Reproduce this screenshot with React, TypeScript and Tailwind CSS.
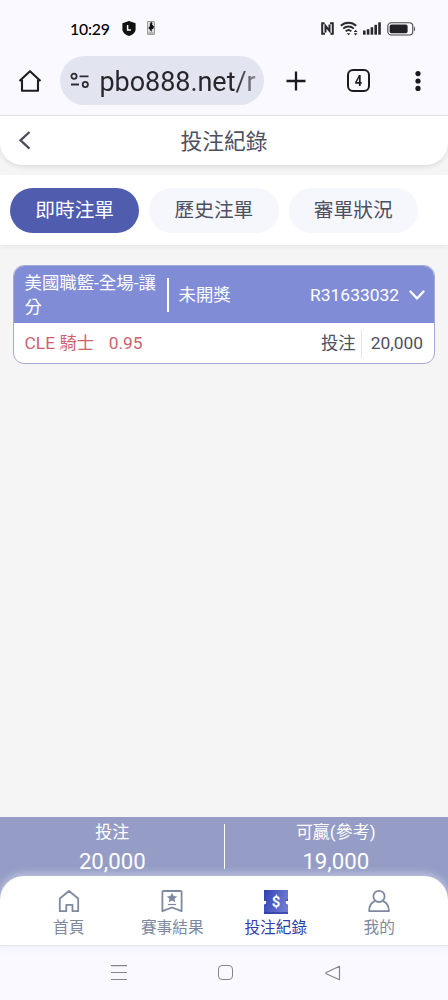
import { useState } from "react";
import type { ReactNode } from "react";

const tabs = ["即時注單", "歷史注單", "審單狀況"];

function StatusBar() {
  return (
    <div className="flex h-14 items-center pl-[70px] pr-8 text-[#1b1b1f]">
      <span className="w-[40px] whitespace-nowrap pt-[2px] font-[Lato,sans-serif] text-[15.800px] font-medium leading-none tracking-[-0.2px] text-black">
        10:29
      </span>
      <svg className="ml-3" width="14" height="15" viewBox="0 0 14 15">
        <path d="M0.4 2.2 7 0l6.6 2.2v6c0 3.5-3 5.4-6.6 6.800C3.400 13.600.4 11.700.4 8.200Z" fill="#111" />
        <path d="M5.600 4v5h3.300" stroke="#fff" strokeWidth="1.500" fill="none" />
      </svg>
      <svg className="ml-[11px]" width="8" height="14" viewBox="0 0 8 14">
        <rect x="0.500" y="0.500" width="7" height="13" rx="0.500" fill="#ddd" stroke="#888" strokeWidth="0.800" />
        <path d="M4 .8 5.500 2 5 3.500 7 5.500 6.500 7.500 4.500 8.500 5 10.500 3.500 10 3 8.500 1.200 7 2.800 5.500 3 3Z" fill="#111" />
        <path d="M1.500 12h5" stroke="#777" strokeWidth="0.800" />
      </svg>
      <div className="ml-auto flex items-center">
        <svg width="13" height="13" viewBox="0 0 13 13" fill="none" stroke="#29292d">
          <path d="M4 11.800H1.200V1.200h2.300M9 1.200h2.800v10.600H9.500" strokeWidth="2" />
          <path d="M4.500 10.500V3.800l4 5V2.500" strokeWidth="2" />
        </svg>
        <svg className="ml-[6px]" width="19" height="15" viewBox="0 0 19 15" fill="none" stroke="#29292d">
          <path d="M0.800 4.800C5 .7 12 .7 16.200 4.800M3.200 7.600c3-2.900 7.600-2.900 10.600 0M5.700 10.400c1.700-1.600 3.900-1.600 5.600 0" strokeWidth="1.900" />
          <path d="M6.600 12.200h3.800l-1.900 2Z" fill="#29292d" stroke="none" />
          <path d="m13.700 11 1.900-2.200 1.900 2.200ZM13.700 12.200h3.800l-1.900 2.200Z" fill="#29292d" stroke="none" />
        </svg>
        <svg className="ml-[4px]" width="18" height="13" viewBox="0 0 18 13" fill="#29292d">
          <rect x="0" y="8.500" width="2.600" height="4.200" />
          <rect x="3.800" y="7.200" width="2.600" height="5.500" />
          <rect x="7.600" y="5.200" width="2.600" height="7.500" />
          <rect x="11.400" y="2.800" width="2.600" height="9.900" />
          <rect x="15.200" y="0.300" width="2.600" height="12.400" />
        </svg>
        <svg className="ml-[6px] mt-[1px]" width="29" height="14" viewBox="0 0 29 14">
          <rect x="0.800" y="0.800" width="25" height="12.200" rx="3.500" fill="none" stroke="#444" strokeWidth="1.100" />
          <rect x="2.600" y="2.600" width="18" height="8.600" rx="1.800" fill="#222226" />
          <path d="M27 4.500c1.300.5 1.300 4.300 0 4.800Z" fill="#444" />
        </svg>
      </div>
    </div>
  );
}

function BrowserBar() {
  return (
    <div className="flex h-[49px] items-center">
      <svg className="ml-[18px] shrink-0" width="24" height="24" viewBox="0 0 24 24" fill="none" stroke="#1d1d20" strokeWidth="2.100" strokeLinejoin="round">
        <path d="M1.500 12 12 2.200 22.500 12" />
        <path d="M4 10.500v11.200h16V10.500" />
      </svg>
      <div className="ml-[18px] flex h-[49px] w-[204px] shrink-0 items-center rounded-full bg-[#e2e4f0] pl-[10px]">
        <svg className="mb-[2px] shrink-0" width="20" height="18" viewBox="0 0 20 18" fill="none" stroke="#2b2b30" strokeWidth="1.800">
          <circle cx="4" cy="5.300" r="2.600" />
          <path d="M9.500 5.300h9M1 13.500h8" />
          <circle cx="15.300" cy="13.500" r="2.600" />
        </svg>
        <span className="ml-[9.500px] mt-[2px] whitespace-nowrap bg-linear-to-r from-[#26262a] from-86% to-[#8b8c96] bg-clip-text font-[Roboto,sans-serif] text-[27px] leading-[36px] tracking-[-0.050px] text-transparent">
          pbo888.net/r
        </span>
      </div>
      <svg className="ml-[22px] shrink-0" width="20" height="20" viewBox="0 0 20 20" stroke="#1b1b1f" strokeWidth="2.300">
        <path d="M10 .5v19M.5 10h19" />
      </svg>
      <div className="ml-[41px] flex h-[23px] w-[23px] shrink-0 items-center justify-center rounded-[6px] border-2 border-[#1b1b1f] font-[Roboto,sans-serif] text-[15px] font-bold leading-none text-[#1b1b1f]">
        <span className="scale-x-85 pt-px">4</span>
      </div>
      <svg className="ml-[45px] shrink-0" width="6" height="20" viewBox="0 0 6 20" fill="#1b1b1f">
        <circle cx="3" cy="2.600" r="2.600" />
        <circle cx="3" cy="10" r="2.600" />
        <circle cx="3" cy="17.400" r="2.600" />
      </svg>
    </div>
  );
}

function BetCard() {
  return (
    <div className="mx-[13px] mt-5 h-[99px] overflow-hidden rounded-[11px] border-[1.500px] border-[#a3acd6] bg-white text-[17.400px]">
      <div className="flex h-[57px] items-center bg-[#808dd6] pl-[10.500px] pr-[9px] text-white">
        <div className="w-[142px] leading-6">美國職籃-全場-讓分</div>
        <div className="h-[34px] w-[2.500px] bg-white" />
        <div className="ml-[9.500px] pt-[2px]">未開獎</div>
        <div className="ml-auto pt-[1px]">R31633032</div>
        <svg className="ml-[10px]" width="16" height="10" viewBox="0 0 16 10" fill="none" stroke="white" strokeWidth="2.300" strokeLinecap="round" strokeLinejoin="round">
          <path d="m1.500 1.500 6.500 7 6.500-7" />
        </svg>
      </div>
      <div className="flex h-[40px] items-center pl-[10.500px] pr-[11px] pt-[1px] text-[#4d505e]">
        <span className="text-[#cf6070]">CLE 騎士</span>
        <span className="ml-[14.500px] text-[#cf6070]">0.95</span>
        <span className="ml-auto">投注</span>
        <div className="ml-[5px] mr-[9px] h-7 w-px bg-[#e2e3ec]" />
        <span>20,000</span>
      </div>
    </div>
  );
}

function Summary({ label, value }: { label: string; value: string }) {
  return (
    <div className="flex flex-1 flex-col items-center pt-[3px]">
      <span className="text-[17px] leading-6">{label}</span>
      <span className="mt-[3px] text-[22.200px] leading-7">{value}</span>
    </div>
  );
}

function NavItem({ label, active, children }: { label: string; active?: boolean; children: ReactNode }) {
  return (
    <div className={`flex flex-1 flex-col items-center ${active ? "text-[#303eae]" : "text-[#7e89a0]"}`}>
      <svg width="26" height="26" viewBox="0 0 26 26" fill="none" stroke="currentColor" strokeWidth="1.800" strokeLinejoin="round">
        {children}
      </svg>
      <span className="mt-[2px] text-[15.700px] leading-6">{label}</span>
    </div>
  );
}

function BottomNav() {
  return (
    <nav className="relative -mt-3 flex h-[70px] rounded-t-[24px] border-b border-[#e4e5ec] bg-white px-[17px] pt-[12px] shadow-[0_-1px_7px_2px_rgba(225,228,247,0.5)]">
      <NavItem label="首頁">
        <path d="M3.800 10.500 13 3l9.200 7.500v12.700h-5.700v-6.400h-6.200v6.400H3.800Z" />
      </NavItem>
      <NavItem label="賽事結果">
        <path d="M3.400 4.200q0-1.200 1.200-1.200h16.800q1.200 0 1.200 1.200v19L13 19.500l-9.600 3.700Z" />
        <path d="m13 4.800 1.600 3.200 3.600.4-2.600 2.400.7 3.500-3.300-1.800-3.300 1.800.7-3.500-2.600-2.400 3.600-.4Z" fill="currentColor" stroke="none" />
        <path d="M9 16.500h8" strokeWidth="1.200" />
      </NavItem>
      <NavItem label="投注紀錄" active>
        <defs>
          <linearGradient id="ticket" x1="0" x2="1" y1="0" y2="0.300">
            <stop offset="0" stopColor="#3040b4" />
            <stop offset="1" stopColor="#6c7bd0" />
          </linearGradient>
        </defs>
        <path d="M1 2h24v9.800a2.300 2.300 0 0 0 0 4.600V26H1v-9.600a2.300 2.300 0 0 0 0-4.600Z" fill="url(#ticket)" stroke="none" />
        <path d="M1 24h24v2H1Z" fill="#2734a0" opacity="0.600" stroke="none" />
        <path d="m1 11 3.300 1.800H1ZM25 11l-3.300 1.800H25Z" fill="#26318c" stroke="none" />
        <text x="13" y="19.200" textAnchor="middle" fill="white" stroke="none" fontSize="15" fontWeight="700">$</text>
      </NavItem>
      <NavItem label="我的">
        <circle cx="13" cy="8.400" r="5.600" />
        <path d="M9.300 12.800C5.300 14.300 3.100 18 3.100 23.100h19.800c0-5.100-2.200-8.800-6.200-10.300" />
      </NavItem>
    </nav>
  );
}

function SystemNav() {
  return (
    <div className="flex h-[54px] items-center bg-[#f9f9ff]">
      <svg className="ml-[111px]" width="16" height="16" viewBox="0 0 16 16" stroke="#85858c" strokeWidth="1.200">
        <path d="M0 .6h16M0 7.500h16M0 14.500h16" />
      </svg>
      <div className="mb-[1px] ml-[91px] h-[15px] w-[15px] rounded-[4px] border-[1.500px] border-[#85858c]" />
      <svg className="mb-[1px] ml-[92px]" width="16" height="16" viewBox="0 0 16 16" fill="none" stroke="#85858c" strokeWidth="1.200" strokeLinejoin="round">
        <path d="M14.500 1.200v13.600L1.200 8.700q-1-.6 0-1.200Z" />
      </svg>
    </div>
  );
}

export default function App() {
  const [selected, setSelected] = useState(0);

  return (
    <div className="flex h-[1000px] w-[448px] flex-col overflow-hidden bg-[#f5f5f6] font-[Roboto,'Noto_Sans_CJK_TC',sans-serif]">
      <div className="h-[116px] shrink-0 border-b border-[#e3e3ec] bg-[#f9f9ff]">
        <StatusBar />
        <BrowserBar />
      </div>

      <header className="relative flex h-[49px] shrink-0 items-center justify-center rounded-b-[22px] bg-white shadow-[0_2px_5px_rgba(0,0,0,0.1)]">
        <button className="absolute left-[18px] top-[15px]">
          <svg width="13" height="19" viewBox="0 0 13 19" fill="none" stroke="#4b4e5a" strokeWidth="2.300">
            <path d="M11.500 1 2.500 9.300l9 8.300" />
          </svg>
        </button>
        <h1 className="pt-[4px] text-[21.800px] text-[#4d505e]">投注紀錄</h1>
      </header>

      <div className="mt-[10px] flex h-[70px] shrink-0 items-center gap-[10px] bg-white px-[10px] shadow-[0_2px_4px_rgba(0,0,0,0.06)]">
        {tabs.map((tab, index) => (
          <button
            key={tab}
            onClick={() => setSelected(index)}
            className={`h-[45px] w-[129.300px] rounded-full pt-[2px] text-[19.700px] ${
              selected === index ? "bg-[#505daf] text-white" : "bg-[#f6f7fd] text-[#4d505e]"
            }`}
          >
            {tab}
          </button>
        ))}
      </div>

      <main className="flex-1">
        <BetCard />
      </main>

      <div className="flex h-[71px] shrink-0 bg-[#959dc6] text-white">
        <Summary label="投注" value="20,000" />
        <div className="-mx-px mt-[7px] h-[45px] w-px bg-white" />
        <Summary label="可贏(參考)" value="19,000" />
      </div>
      <div className="shrink-0 bg-[#959dc6]">
        <BottomNav />
      </div>
      <SystemNav />
    </div>
  );
}
